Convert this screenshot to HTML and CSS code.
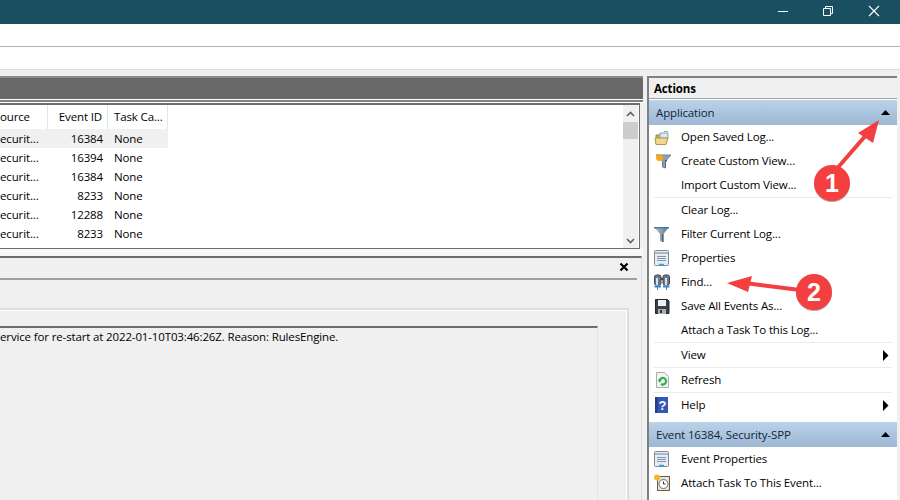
FILE: index.html
```html
<!DOCTYPE html>
<html lang="en">
<head>
<meta charset="utf-8">
<title>Event Viewer</title>
<link rel="stylesheet" href="styles.css">
</head>
<body>
<header class="titlebar">
  <svg class="win-ico" width="140" height="24" viewBox="0 0 140 24"><path d="M18 11.500H28" stroke="#fff" fill="none"/><path d="M63.500 8.500h7v7h-7zM65.500 8.500v-2h7v7h-2" stroke="#fff" fill="none"/><path d="M109 6l10 10M119 6l-10 10" stroke="#fff" stroke-width="1.100" fill="none"/></svg>
</header>
<div class="menubar"></div>
<div class="toolbar"></div>
<main class="workspace">
  <section class="left">
    <div class="darkhead"></div>
    <div class="strip"></div>
    <div class="list">
      <div class="table">
        <div class="row head"><span class="c1 first">ource</span><span class="c2">Event ID</span><span class="c3">Task Ca...</span></div>
        <div class="row sel"><span class="c1">ecurit...</span><span class="c2">16384</span><span class="c3">None</span></div>
        <div class="row"><span class="c1">ecurit...</span><span class="c2">16394</span><span class="c3">None</span></div>
        <div class="row"><span class="c1">ecurit...</span><span class="c2">16384</span><span class="c3">None</span></div>
        <div class="row"><span class="c1">ecurit...</span><span class="c2">8233</span><span class="c3">None</span></div>
        <div class="row"><span class="c1">ecurit...</span><span class="c2">12288</span><span class="c3">None</span></div>
        <div class="row"><span class="c1">ecurit...</span><span class="c2">8233</span><span class="c3">None</span></div>
      </div>
      <div class="scroll">
        <svg class="up" width="15" height="17" viewBox="0 0 15 17"><path d="M4 11l3.500-3.500L11 11" stroke="#606060" stroke-width="1.600" fill="none"/></svg>
        <div class="thumb"></div>
        <svg class="down" width="15" height="15" viewBox="0 0 15 15"><path d="M4 6l3.500 3.500L11 6" stroke="#606060" stroke-width="1.600" fill="none"/></svg>
      </div>
    </div>
    <div class="sep"></div>
    <div class="details">
      <div class="detail-top">
        <svg class="close" width="10" height="10" viewBox="0 0 10 10"><path d="M1.500 1.500l7 7M8.500 1.500l-7 7" stroke="#000" stroke-width="2.200" fill="none"/></svg>
      </div>
      <div class="tabstrip"></div>
      <div class="tabbox">
        <div class="tabinner">
          <div class="msgbox">ervice for re-start at 2022-01-10T03:46:26Z. Reason: RulesEngine.</div>
        </div>
      </div>
    </div>
  </section>
  <aside class="actions">
    <h2 class="act-title">Actions</h2>
    <div class="group">Application<svg class="tri" width="9" height="5" viewBox="0 0 9 5"><path d="M4.500 0L9 5H0z"/></svg></div>
    <ul class="items">
      <li><svg class="ic" width="18" height="18" viewBox="0 0 18 18"><path d="M10 3.500h4" stroke="#6fd06f"/><path d="M2 7h5l1 1h4v8H2z" fill="#c9a860" stroke="#a88b4a"/><path d="M6 5h8v5H6z" fill="#dfe9f3" stroke="#8aa0b8"/><path d="M1 10h13l-2 6.500H2z" fill="#f0d890" stroke="#b0964f"/></svg>Open Saved Log...</li>
      <li><svg class="ic" width="18" height="18" viewBox="0 0 18 18"><path d="M2 3h15l-5.500 6v7L8.500 15V9z" fill="#8c9fb2" stroke="#6f8499"/><path d="M11 8h2.500l-2 2.500V16H11z" fill="#46596c"/><circle cx="5.500" cy="5.500" r="3.500" fill="#f5a81e"/></svg>Create Custom View...</li>
      <li class="rule"><span class="noic"></span>Import Custom View...</li>
      <li><span class="noic"></span>Clear Log...</li>
      <li><svg class="ic" width="18" height="18" viewBox="0 0 18 18"><defs><linearGradient id="fg" x1="0" x2="1" y1="0" y2="0"><stop offset="0" stop-color="#b8c8d6"/><stop offset="1" stop-color="#5f7488"/></linearGradient></defs><path d="M0 2h15L9.500 9v8L6 16V9z" fill="url(#fg)"/><path d="M0 2h15v1.500H0z" fill="#3f7f9f"/><path d="M8 9h1.500v8H8z" fill="#4f6274"/></svg>Filter Current Log...</li>
      <li><svg class="ic" width="18" height="18" viewBox="0 0 18 18"><rect x="0.500" y="1.500" width="14" height="15" rx="1" fill="#e9edf1" stroke="#7d8a96"/><path d="M1 4h13" stroke="#aeb9c4" stroke-width="2"/><path d="M3 7.500h9M3 9.500h9M3 11.500h9" stroke="#7a98b4"/><path d="M5 15.500h5" stroke="#2fa6e0" stroke-width="1.500"/></svg>Properties</li>
      <li><svg class="ic" width="18" height="18" viewBox="0 0 18 18"><rect x="0.500" y="2" width="6.500" height="10" rx="2" fill="#6f7a86" stroke="#3e4650"/><rect x="9" y="2" width="6.500" height="10" rx="2" fill="#6f7a86" stroke="#3e4650"/><path d="M7 6h2" stroke="#3e4650" stroke-width="2"/><path d="M2 5h2v7H2zM11 5h2v7h-2z" fill="#d8e2ec"/><path d="M0.500 13.500h6.500M9 13.500h6.500" stroke="#2f86c8" stroke-width="2"/><path d="M3.500 14v3M12.500 14v3" stroke="#2f86c8"/></svg>Find...</li>
      <li><svg class="ic" width="18" height="18" viewBox="0 0 18 18"><path d="M1.500 2.500h12l1.500 1.500v12.500H1.500z" fill="#3a3f45" stroke="#23272b"/><path d="M4 3h8v6H4z" fill="#eef0f2"/><path d="M4 12h8v5H4z" fill="#a9b0b7"/><path d="M6 13h2v3H6z" fill="#2e3338"/></svg>Save All Events As...</li>
      <li class="rule"><span class="noic"></span>Attach a Task To this Log...</li>
      <li class="rule"><span class="noic"></span>View<svg class="sub" width="6" height="11" viewBox="0 0 6 11"><path d="M0 0l5.500 5.500L0 11z"/></svg></li>
      <li class="rule"><svg class="ic" width="18" height="18" viewBox="0 0 18 18"><path d="M2.500 1.500h8l4 4v11h-12z" fill="#f2f4f2" stroke="#a8aeb0"/><path d="M5.500 10a3.300 3.300 0 1 1 1.500 3" stroke="#35b04a" stroke-width="2.200" fill="none"/><path d="M4 8.500h4L5.500 12z" fill="#35b04a"/></svg>Refresh</li>
      <li><svg class="ic" width="18" height="18" viewBox="0 0 18 18"><rect x="1" y="1" width="13" height="16" fill="#3557b5"/><rect x="1" y="1" width="2.500" height="16" fill="#263f87"/><text x="4.500" y="13.500" class="q">?</text></svg>Help<svg class="sub" width="6" height="11" viewBox="0 0 6 11"><path d="M0 0l5.500 5.500L0 11z"/></svg></li>
    </ul>
    <div class="group second">Event 16384, Security-SPP<svg class="tri" width="9" height="5" viewBox="0 0 9 5"><path d="M4.500 0L9 5H0z"/></svg></div>
    <ul class="items">
      <li><svg class="ic" width="18" height="18" viewBox="0 0 18 18"><rect x="0.500" y="1.500" width="14" height="15" rx="1" fill="#e9edf1" stroke="#7d8a96"/><path d="M1 4h13" stroke="#aeb9c4" stroke-width="2"/><path d="M3 7.500h9M3 9.500h9M3 11.500h9" stroke="#7a98b4"/><path d="M5 15.500h5" stroke="#2fa6e0" stroke-width="1.500"/></svg>Event Properties</li>
      <li><svg class="ic" width="18" height="18" viewBox="0 0 18 18"><rect x="3.500" y="2.500" width="12" height="14" fill="#e9e4d8" stroke="#6f5a48"/><circle cx="9.500" cy="10" r="4.500" fill="#fff" stroke="#6b6b6b"/><path d="M9.500 7.500V10h2" stroke="#333" fill="none"/><circle cx="3" cy="3.500" r="3" fill="#f6b52a"/></svg>Attach Task To This Event...</li>
      <li><svg class="ic" width="18" height="18" viewBox="0 0 18 18"><rect x="1" y="3" width="14" height="14" fill="#dcdcdc"/></svg></li>
    </ul>
  </aside>
</main>
<svg class="callouts" width="900" height="500" viewBox="0 0 900 500">
  <path d="M834 172L867 134" stroke="#f33f3f" stroke-width="4" fill="none"/>
  <path d="M879 120L858 133L873 143z" fill="#f33f3f"/>
  <circle cx="832" cy="184" r="18" fill="#8a3a3a" opacity=".5"/>
  <circle cx="832" cy="183" r="18" fill="#f33f3f"/>
  <path d="M800 290L745 283" stroke="#f33f3f" stroke-width="4" fill="none"/>
  <path d="M727 283L752 276L748 292z" fill="#f33f3f"/>
  <circle cx="814" cy="293" r="18" fill="#8a3a3a" opacity=".5"/>
  <circle cx="814" cy="292" r="18" fill="#f33f3f"/>
  <text x="832" y="192" class="num">1</text>
  <text x="814" y="301" class="num">2</text>
</svg>
</body>
</html>
```
FILE: styles.css
```css
html, body { margin: 0; padding: 0; }
body {
  width: 900px; height: 500px; overflow: hidden; position: relative;
  background: #f0f0f0; color: #000;
  font: 11.5px/1 "Open Sans", "Noto Sans", sans-serif;
  letter-spacing: -0.14px;
}
.titlebar { height: 24px; background: #1a4f61; display: flex; justify-content: flex-end; }
.win-ico { display: block; }
.menubar { height: 22px; background: #fff; border-bottom: 1px solid #b4b4b4; }
.toolbar { height: 22px; background: #fff; border-bottom: 1px solid #dcdcdc; }
.workspace { display: flex; padding-top: 6px; height: 424px; }
.left { width: 643px; display: flex; flex-direction: column; }
.darkhead { height: 21px; background: #696969; border-top: 2px solid #8a8a8a; }
.strip { height: 2px; background: #808080; border-top: 1px solid #fff; border-bottom: 1px solid #fff; }
.list { height: 143px; margin-right: 3px; background: #fff; display: flex; border-top: 2px solid #6d6d6d; border-right: 1px solid #6d6d6d; border-bottom: 1px solid #6d6d6d; }
.table { flex: 1; }
.row { display: flex; height: 19px; align-items: center; width: 168px; }
.row.head { height: 24px; }
.row.sel { background: #f0f0f0; }
.c1 { width: 48px; box-sizing: border-box; }
.c2 { width: 60px; text-align: right; padding-right: 5px; box-sizing: border-box; }
.c3 { width: 60px; padding-left: 6px; box-sizing: border-box; }
.head span { height: 24px; line-height: 24px; border-right: 1px solid #e5e5e5; }
.scroll { width: 15px; margin-right: 1px; background: #f0f0f0; display: flex; flex-direction: column; }
.scroll svg { display: block; flex: none; }
.thumb { height: 17px; background: #cdcdcd; }
.down { margin-top: auto; }
.sep { height: 7px; background: #f8f8f8; }
.details { flex: 1; background: #f0f0f0; border-top: 2px solid #6d6d6d; border-right: 1px solid #dcdcdc; margin-right: 1px; display: flex; flex-direction: column; }
.detail-top { height: 18px; padding-bottom: 2px; display: flex; justify-content: flex-end; align-items: center; padding-right: 12px; }
.close { display: block; }
.tabstrip { height: 0; border-top: 2px solid #a0a0a0; margin-right: 4px; }
.tabbox { flex: 1; margin-top: 28px; margin-right: 12px; border-top: 2px solid #dedede; border-right: 2px solid #dedede; display: flex; flex-direction: column; }
.tabinner { flex: 1; border-top: 1px solid #fff; border-right: 1px solid #fff; padding-top: 15px; display: flex; flex-direction: column; }
.msgbox { flex: 1; border-top: 2px solid #6d6d6d; border-right: 1px solid #e4e4e4; margin-right: 28px; padding-top: 1px; line-height: 16px; }
.actions { margin-left: 4px; width: 248px; background: #fff; border-left: 2px solid #808080; border-top: 2px solid #808080; }
.act-title { margin: 0 0 1px; height: 19px; padding: 1px 0 0 5px; line-height: 20px; font-size: 11.5px; font-weight: 700; background: #f0f0f0; border-bottom: 1px solid #a0a0a0; }
.group { height: 25px; padding: 0 7px; background: linear-gradient(#bbd2e8, #9db8d4); color: #10253a; display: flex; justify-content: space-between; align-items: center; }
.group.second { margin-top: 5px; }
.tri { display: block; }
.items { list-style: none; margin: 0; padding: 0; }
.items li { height: 24px; display: flex; align-items: center; position: relative; margin: 0 5px; }
.items li.rule { border-bottom: 1px solid #eaeaea; }
.ic { width: 18px; height: 18px; margin-right: 9px; flex: none; display: block; }
.noic { width: 27px; flex: none; }
.sub { position: absolute; right: 3px; top: 7px; display: block; }
.q { font: bold 13px "Liberation Sans", sans-serif; fill: #fff; }
.callouts { position: absolute; left: 0; top: 0; pointer-events: none; }
.num { font: bold 25px "Liberation Sans", sans-serif; fill: #fff; text-anchor: middle; }
```
